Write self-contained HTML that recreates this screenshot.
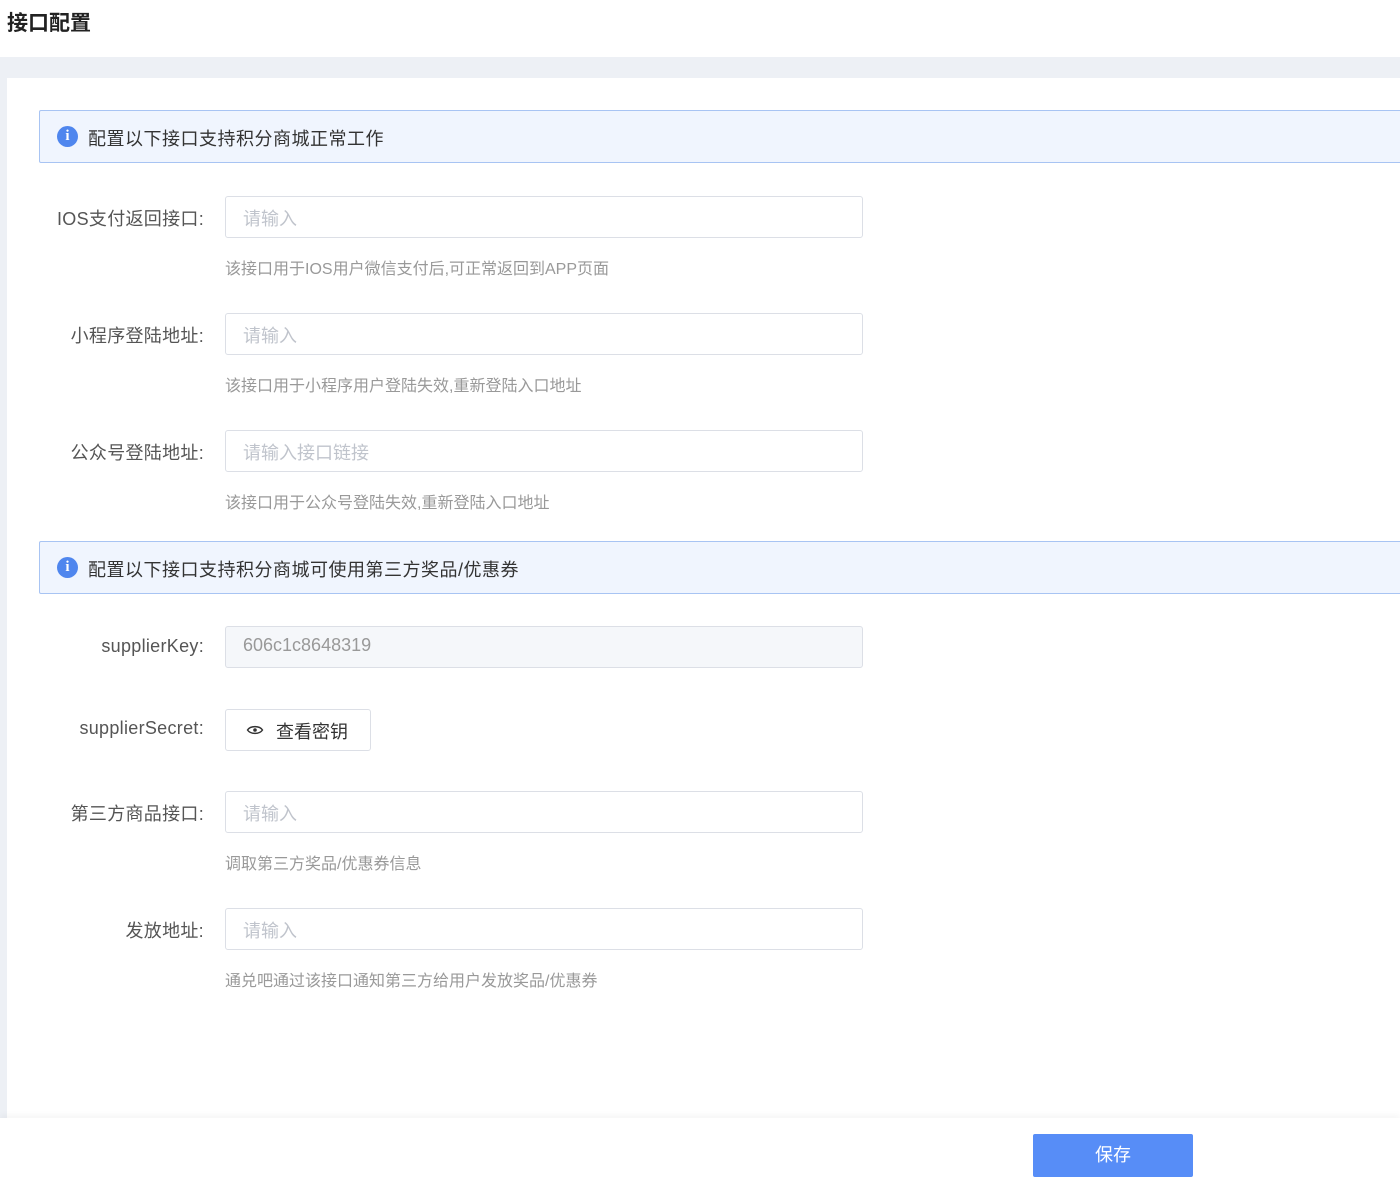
<!DOCTYPE html>
<html><head><meta charset="utf-8"><style>
*{margin:0;padding:0;box-sizing:border-box}
body{width:1400px;height:1182px;overflow:hidden;background:#fff;font-family:"Liberation Sans","Noto Sans CJK SC",sans-serif;position:relative}
.title{position:absolute;left:7px;top:7px;font-size:21px;color:#222;font-weight:bold}
.band{position:absolute;left:0;top:57px;width:1400px;height:1061px;background:#edf0f5}
.card{position:absolute;left:7px;top:78px;width:1393px;height:1040px;background:#fff}
.alert{position:absolute;left:39px;width:1370px;height:53px;background:#f0f5fe;border:1px solid #a8c4f3;border-radius:2px}
.alert .ic{position:absolute;left:17px;top:15px;width:21px;height:21px;border-radius:50%;background:#4f86ee;color:#fff;font-size:15px;font-weight:bold;text-align:center;line-height:21px;font-family:"Liberation Serif",serif}
.alert .t{position:absolute;left:48px;top:14px;font-size:18px;letter-spacing:0.5px;color:#333}
.lab{position:absolute;right:1196px;font-size:18px;letter-spacing:0.3px;color:#555;text-align:right;white-space:nowrap}
.inp{position:absolute;left:225px;width:638px;height:42px;border:1px solid #dcdfe6;border-radius:3px;font-size:18px;color:#c0c4cc;padding:8px 0 0 17px}
.help{position:absolute;left:225px;font-size:16px;color:#999}
.btn2{position:absolute;left:225px;top:709px;width:146px;height:42px;border:1px solid #dcdfe6;border-radius:3px;font-size:18px;color:#333;padding:8px 0 0 50px}
.foot{position:absolute;left:0;top:1118px;width:1400px;height:64px;background:#fff;box-shadow:0 -3px 6px rgba(0,0,0,0.04)}
.save{position:absolute;left:1033px;top:1134px;width:160px;height:43px;background:#578df7;border-radius:2px;color:#fff;font-size:18px;text-align:center;line-height:43px}
</style></head><body>
<div class="title">接口配置</div>
<div class="band"></div>
<div class="card"></div>
<div class="alert" style="top:110px"><div class="ic">i</div><div class="t">配置以下接口支持积分商城正常工作</div></div>
<div class="lab" style="top:205px">IOS支付返回接口:</div>
<div class="inp" style="top:196px">请输入</div>
<div class="help" style="top:255px">该接口用于IOS用户微信支付后,可正常返回到APP页面</div>
<div class="lab" style="top:322px">小程序登陆地址:</div>
<div class="inp" style="top:313px">请输入</div>
<div class="help" style="top:372px">该接口用于小程序用户登陆失效,重新登陆入口地址</div>
<div class="lab" style="top:439px">公众号登陆地址:</div>
<div class="inp" style="top:430px">请输入接口链接</div>
<div class="help" style="top:489px">该接口用于公众号登陆失效,重新登陆入口地址</div>
<div class="alert" style="top:541px"><div class="ic">i</div><div class="t">配置以下接口支持积分商城可使用第三方奖品/优惠券</div></div>
<div class="lab" style="top:636px">supplierKey:</div>
<div class="inp" style="top:626px;background:#f5f7fa;color:#999">606c1c8648319</div>
<div class="lab" style="top:718px">supplierSecret:</div>
<div class="btn2"><svg style="position:absolute;left:20px;top:13px" width="18" height="14" viewBox="0 0 18 14"><path d="M1.5 7C4.5 2.5 13.5 2.5 16.5 7C13.5 11.5 4.5 11.5 1.5 7Z" fill="none" stroke="#333" stroke-width="1.4"/><circle cx="9" cy="7" r="1.8" fill="#333"/></svg>查看密钥</div>
<div class="lab" style="top:800px">第三方商品接口:</div>
<div class="inp" style="top:791px">请输入</div>
<div class="help" style="top:850px">调取第三方奖品/优惠券信息</div>
<div class="lab" style="top:917px">发放地址:</div>
<div class="inp" style="top:908px">请输入</div>
<div class="help" style="top:967px">通兑吧通过该接口通知第三方给用户发放奖品/优惠券</div>
<div class="foot"></div>
<div class="save">保存</div>
</body></html>
